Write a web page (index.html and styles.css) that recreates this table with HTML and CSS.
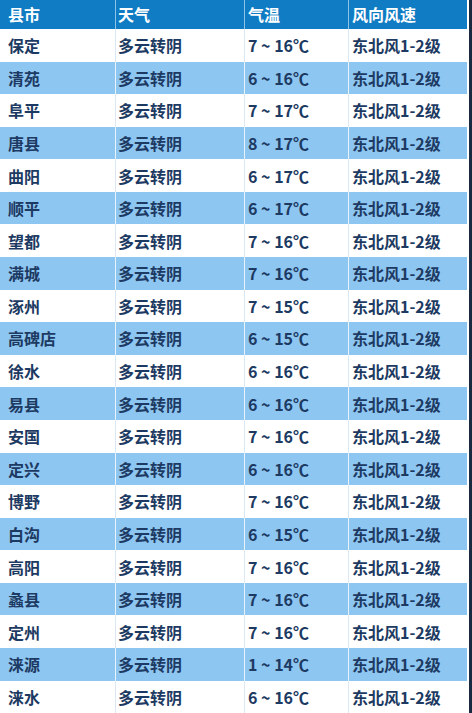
FILE: index.html
```html
<!DOCTYPE html>
<html lang="zh">
<head>
<meta charset="utf-8">
<link rel="stylesheet" href="styles.css">
</head>
<body>
<div class="page">
<div class="grid">
  <div class="row head"><div class="c c1">县市</div><div class="c c2">天气</div><div class="c c3">气温</div><div class="c c4">风向风速</div></div>
  <div class="row"><div class="c c1">保定</div><div class="c c2">多云转阴</div><div class="c c3">7 ~ 16℃</div><div class="c c4">东北风1-2级</div></div>
  <div class="row alt"><div class="c c1">清苑</div><div class="c c2">多云转阴</div><div class="c c3">6 ~ 16℃</div><div class="c c4">东北风1-2级</div></div>
  <div class="row"><div class="c c1">阜平</div><div class="c c2">多云转阴</div><div class="c c3">7 ~ 17℃</div><div class="c c4">东北风1-2级</div></div>
  <div class="row alt"><div class="c c1">唐县</div><div class="c c2">多云转阴</div><div class="c c3">8 ~ 17℃</div><div class="c c4">东北风1-2级</div></div>
  <div class="row"><div class="c c1">曲阳</div><div class="c c2">多云转阴</div><div class="c c3">6 ~ 17℃</div><div class="c c4">东北风1-2级</div></div>
  <div class="row alt"><div class="c c1">顺平</div><div class="c c2">多云转阴</div><div class="c c3">6 ~ 17℃</div><div class="c c4">东北风1-2级</div></div>
  <div class="row"><div class="c c1">望都</div><div class="c c2">多云转阴</div><div class="c c3">7 ~ 16℃</div><div class="c c4">东北风1-2级</div></div>
  <div class="row alt"><div class="c c1">满城</div><div class="c c2">多云转阴</div><div class="c c3">7 ~ 16℃</div><div class="c c4">东北风1-2级</div></div>
  <div class="row"><div class="c c1">涿州</div><div class="c c2">多云转阴</div><div class="c c3">7 ~ 15℃</div><div class="c c4">东北风1-2级</div></div>
  <div class="row alt"><div class="c c1">高碑店</div><div class="c c2">多云转阴</div><div class="c c3">6 ~ 15℃</div><div class="c c4">东北风1-2级</div></div>
  <div class="row"><div class="c c1">徐水</div><div class="c c2">多云转阴</div><div class="c c3">6 ~ 16℃</div><div class="c c4">东北风1-2级</div></div>
  <div class="row alt"><div class="c c1">易县</div><div class="c c2">多云转阴</div><div class="c c3">6 ~ 16℃</div><div class="c c4">东北风1-2级</div></div>
  <div class="row"><div class="c c1">安国</div><div class="c c2">多云转阴</div><div class="c c3">7 ~ 16℃</div><div class="c c4">东北风1-2级</div></div>
  <div class="row alt"><div class="c c1">定兴</div><div class="c c2">多云转阴</div><div class="c c3">6 ~ 16℃</div><div class="c c4">东北风1-2级</div></div>
  <div class="row"><div class="c c1">博野</div><div class="c c2">多云转阴</div><div class="c c3">7 ~ 16℃</div><div class="c c4">东北风1-2级</div></div>
  <div class="row alt"><div class="c c1">白沟</div><div class="c c2">多云转阴</div><div class="c c3">6 ~ 15℃</div><div class="c c4">东北风1-2级</div></div>
  <div class="row"><div class="c c1">高阳</div><div class="c c2">多云转阴</div><div class="c c3">7 ~ 16℃</div><div class="c c4">东北风1-2级</div></div>
  <div class="row alt"><div class="c c1">蠡县</div><div class="c c2">多云转阴</div><div class="c c3">7 ~ 16℃</div><div class="c c4">东北风1-2级</div></div>
  <div class="row"><div class="c c1">定州</div><div class="c c2">多云转阴</div><div class="c c3">7 ~ 16℃</div><div class="c c4">东北风1-2级</div></div>
  <div class="row alt"><div class="c c1">涞源</div><div class="c c2">多云转阴</div><div class="c c3">1 ~ 14℃</div><div class="c c4">东北风1-2级</div></div>
  <div class="row"><div class="c c1">涞水</div><div class="c c2">多云转阴</div><div class="c c3">6 ~ 16℃</div><div class="c c4">东北风1-2级</div></div>
</div>
<div class="edge"></div>
</div>
</body>
</html>
```

FILE: styles.css
```css
html, body {
  margin: 0;
  padding: 0;
  background: #ffffff;
}
.page {
  width: 472px;
  height: 713px;
  display: flex;
  overflow: hidden;
}
.grid {
  width: 467px;
  display: flex;
  flex-direction: column;
}
.edge {
  width: 3px;
  margin-left: 2px;
  background: #1a2a40;
}
.row {
  display: flex;
  height: 32.6px;
  background: #ffffff;
  color: #1d3a62;
  font-family: "Noto Sans CJK SC", "Noto Sans", sans-serif;
  font-weight: 700;
  font-size: 16px;
}
.row.alt {
  background: #8ec6f2;
}
.row.head {
  height: 29px;
  background: #0f7cc3;
  color: #ffffff;
  font-size: 16px;
}
.c {
  display: flex;
  align-items: center;
  box-sizing: border-box;
  padding-left: 8px;
  border-right: 1px solid #dbe8f3;
}
.row.alt .c {
  border-right-color: #e8f3fc;
}
.row.head .c {
  border-right-color: #8cc2e8;
}
.c1 { width: 116px; }
.c2 { width: 129px; padding-left: 2px; }
.c3 { width: 104px; padding-left: 3px; }
.c4 { width: 118px; padding-left: 3px; border-right: none; }
```
